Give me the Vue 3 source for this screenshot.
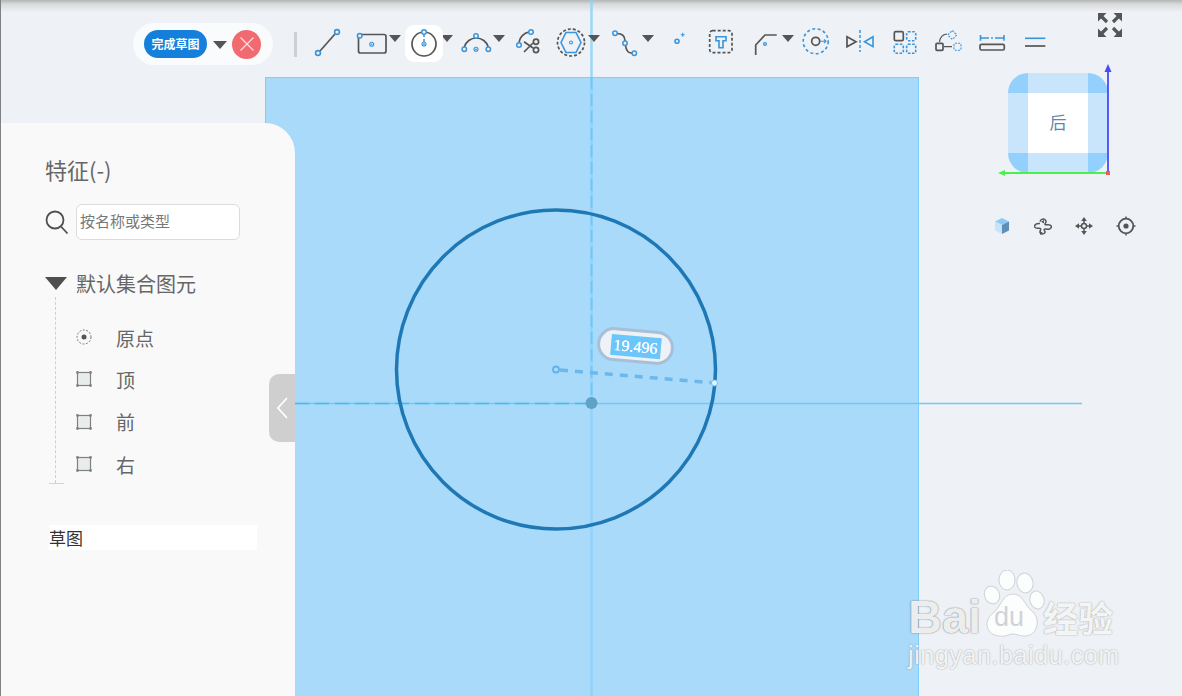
<script setup>
const tools = [
  { id: 'line', w: 44 },
  { id: 'rect', w: 52, caret: true },
  { id: 'circle', w: 52, caret: true, active: true },
  { id: 'arc', w: 52, caret: true },
  { id: 'trim', w: 43 },
  { id: 'polygon', w: 54, caret: true },
  { id: 'spline', w: 54, caret: true },
  { id: 'point', w: 42 },
  { id: 'text', w: 44 },
  { id: 'fillet', w: 51, caret: true },
  { id: 'offset', w: 44 },
  { id: 'mirror', w: 45 },
  { id: 'pattern', w: 43 },
  { id: 'transform', w: 44 },
  { id: 'dimension', w: 43 },
  { id: 'constraint', w: 36 }
]
const items = [
  { label: '原点', kind: 'origin' },
  { label: '顶', kind: 'plane' },
  { label: '前', kind: 'plane' },
  { label: '右', kind: 'plane' }
]
</script>

<template>
  <div class="app">
    <div class="top-shade"></div>

    <div class="plane"></div>

    <svg class="sketch" width="1182" height="696" viewBox="0 0 1182 696">
      <line x1="295" y1="403.5" x2="1082" y2="403.5" class="axis" />
      <line x1="295" y1="403.5" x2="590" y2="403.5" class="axis-dash" />
      <line x1="591.500" y1="0" x2="591.500" y2="696" class="axis-v" />
      <line x1="591.500" y1="77" x2="591.500" y2="403" class="axis-v-dash" />
      <circle cx="556" cy="369.500" r="159.500" class="profile" />
      <circle cx="591.500" cy="403" r="6" class="origin-blob" />
      <line x1="560" y1="370" x2="714" y2="383" class="dim-line" />
      <circle cx="556" cy="369.500" r="3" class="dim-start" />
      <circle cx="714.500" cy="383" r="3" class="dim-end" />
    </svg>

    <div class="dim-label"><span class="dim-value">19.496</span></div>

    <div class="toolbar">
      <div class="finish">
        <button class="finish-btn">完成草图</button>
        <span class="caret finish-caret"></span>
        <span class="cancel">
          <svg width="16" height="16" viewBox="0 0 16 16"><path d="M1.500 1.500l13 13M14.500 1.500l-13 13" class="x" /></svg>
        </span>
      </div>
      <div class="sep"></div>
      <div v-for="t in tools" :key="t.id" class="tool" :style="{ width: t.w + 'px' }">
        <div class="tool-icon" :class="{ active: t.active }">
          <svg width="36" height="36" viewBox="0 0 36 36">
            <template v-if="t.id === 'line'">
              <line x1="10" y1="26" x2="25" y2="9" class="d" />
              <circle cx="8" cy="28" r="2.400" class="b" /><circle cx="27" cy="7" r="2.400" class="b" />
            </template>
            <template v-else-if="t.id === 'rect'">
              <rect x="4.500" y="9.500" width="27.500" height="18.500" rx="2" class="d" />
              <circle cx="5.700" cy="10.700" r="2.300" class="bw" />
              <circle cx="17.700" cy="19.300" r="2" class="b-thin" /><circle cx="17.700" cy="19.300" r=".8" class="dot" />
            </template>
            <template v-else-if="t.id === 'circle'">
              <circle cx="18" cy="19" r="12" class="d" />
              <line x1="18" y1="9" x2="18" y2="18" class="b-dash" />
              <circle cx="18" cy="7" r="2.300" class="bw" />
              <circle cx="18" cy="19" r="2" class="b-thin" /><circle cx="18" cy="19" r=".9" class="dot" />
            </template>
            <template v-else-if="t.id === 'arc'">
              <path d="M6.300 22A12.500 12.500 0 0 1 30.300 22" class="d" />
              <circle cx="6.300" cy="24.300" r="2.200" class="bw" /><circle cx="30.300" cy="24.300" r="2.200" class="bw" />
              <circle cx="18" cy="11" r="2.200" class="bw" />
              <circle cx="18" cy="24.300" r="2" class="b-thin" /><circle cx="18" cy="24.300" r=".9" class="dot" />
            </template>
            <template v-else-if="t.id === 'trim'">
              <path d="M9 17.500C9.500 12 14 8 19 7" class="d" />
              <circle cx="21" cy="7" r="2.300" class="bw" /><circle cx="9" cy="20" r="2.300" class="bw" />
              <path d="M14 16.700L23 23M14 27L23 18" class="d" />
              <circle cx="26" cy="16.700" r="2.600" class="d" /><circle cx="26" cy="25" r="2.600" class="d" />
            </template>
            <template v-else-if="t.id === 'polygon'">
              <circle cx="18" cy="17.500" r="13.500" class="d dashed" />
              <path d="M8 17.500L13 7.500H23L28 17.500L23 27.500H13Z" class="b" />
              <circle cx="18" cy="17.500" r="1.500" class="b-thin" />
            </template>
            <template v-else-if="t.id === 'spline'">
              <path d="M10 8.500C16 8.500 18 12 18 16M18.500 20.500C19 25 21 28 25 28.200" class="d" />
              <circle cx="8" cy="8.300" r="2.200" class="bw" /><circle cx="18" cy="18.300" r="2.200" class="bw" /><circle cx="27.300" cy="28.300" r="2.200" class="bw" />
            </template>
            <template v-else-if="t.id === 'point'">
              <circle cx="16" cy="16.300" r="2" class="b" />
              <path d="M21.700 7.700v4M19.700 9.700h4" class="b-thin" />
            </template>
            <template v-else-if="t.id === 'text'">
              <rect x="6.700" y="5.700" width="22.300" height="22" rx="3" class="d dashed" />
              <path d="M13 11.700h10v4h-3v7h-4v-7h-3z" class="b" />
            </template>
            <template v-else-if="t.id === 'fillet'">
              <path d="M8.700 30V20L18 10H29.700" class="d" />
              <circle cx="18" cy="19" r="1.500" class="b-thin" /><circle cx="18" cy="19" r=".8" class="dot" />
            </template>
            <template v-else-if="t.id === 'offset'">
              <circle cx="17.700" cy="16.300" r="12.500" class="b dashed-b" />
              <circle cx="17.700" cy="16.300" r="4" class="d" />
              <path d="M22 16.300h6M26 14.500l2 1.800-2 1.800" class="b-thin" />
            </template>
            <template v-else-if="t.id === 'mirror'">
              <path d="M5 11.700L14 16.700L5 21.700Z" class="d" />
              <line x1="18" y1="5" x2="18" y2="27" class="b-dash" />
              <path d="M31 11.700L22.500 16.700L31 21.700Z" class="b" />
            </template>
            <template v-else-if="t.id === 'pattern'">
              <rect x="7.300" y="6.700" width="9" height="9" rx="1.500" class="d" />
              <rect x="19.700" y="6.700" width="9" height="9" rx="1.500" class="b dashed-s" />
              <rect x="7.300" y="19.300" width="9" height="9" rx="1.500" class="b dashed-s" />
              <rect x="19.700" y="19.300" width="9" height="9" rx="1.500" class="b dashed-s" />
            </template>
            <template v-else-if="t.id === 'transform'">
              <rect x="6" y="18.300" width="7" height="7" rx="1" class="d" />
              <rect x="24" y="18.300" width="7" height="7" rx="1" class="b-thin dashed-t" />
              <path d="M22.300 5.500l4.500 4.500-4.500 4.500-4.500-4.500z" class="b-thin dashed-t" />
              <path d="M9.500 17C10 12 13 9.500 17 9M14 21.700h8" class="d-thin" />
            </template>
            <template v-else-if="t.id === 'dimension'">
              <path d="M6.500 10v5.700M30 10v5.700M6.500 13H15M21 13h9" class="b" />
              <circle cx="18" cy="13" r=".9" class="dot" />
              <rect x="6" y="19.300" width="24.300" height="5.700" rx="1.500" class="d" />
            </template>
            <template v-else-if="t.id === 'constraint'">
              <line x1="8" y1="13.300" x2="28.300" y2="13.300" class="b" />
              <line x1="8" y1="21" x2="28.300" y2="21" class="d" />
            </template>
          </svg>
        </div>
        <span v-if="t.caret" class="caret"></span>
      </div>
    </div>

    <svg class="fullscreen" width="26" height="26" viewBox="0 0 26 26">
      <path d="M1 9.500V1H9.500ZM25 9.500V1H16.500ZM1 16.500V25H9.500ZM25 16.500V25H16.500Z" class="fs-fill" />
      <path d="M3 3L10 10M23 3L16 10M3 23L10 16M23 23L16 16" class="fs-line" />
    </svg>

    <div class="viewcube">
      <span class="c corner"></span><span class="c edge"></span><span class="c corner"></span>
      <span class="c edge"></span><span class="c face">后</span><span class="c edge"></span>
      <span class="c corner"></span><span class="c edge"></span><span class="c corner"></span>
    </div>
    <svg class="triad" width="120" height="120" viewBox="0 0 120 120">
      <path d="M112 114.500V10" class="ax-blue" />
      <path d="M112 4L108.500 12H115.500Z" class="tip-blue" />
      <path d="M112 113H8" class="ax-green" />
      <path d="M2 113L9 110V116Z" class="tip-green" />
      <rect x="110" y="111" width="4" height="4" class="red" />
    </svg>

    <div class="view-tools">
      <svg width="20" height="20" viewBox="0 0 20 20">
        <path d="M10 2L17 5.500L10 9L3 5.500Z" fill="#8ccbf8" />
        <path d="M3 5.500L10 9V18L3 14.500Z" fill="#c5e4fb" />
        <path d="M17 5.500L10 9V18L17 14.500Z" fill="#5e8fb8" />
      </svg>
      <svg width="20" height="20" viewBox="0 0 20 20">
        <path d="M7 5.500C8 2.500 12 2 13 5C13.500 7 11.500 7.500 12 8.500C13 9.500 17 7.500 18.300 10C19 12.500 15.500 14 13 13C11 12.500 10.500 14 12 15.500C12.500 18 8 19 7 16.500C6.500 14.500 8.500 13.500 7.500 12.500C6 11.500 3 13.500 1.700 11C1 8.500 4 7 7 7.500" class="vt" />
        <path d="M7 15l3 2-3 2zM11 4l-3 1.800 3 1.800z" class="vt-fill" />
      </svg>
      <svg width="20" height="20" viewBox="0 0 20 20">
        <path d="M10 3.500V7M10 13V16.500M3.500 10H7M13 10H16.500" class="vt" />
        <circle cx="10" cy="10" r="2.500" class="vt" />
        <path d="M10 1L12.800 5H7.200ZM10 19L7.200 15H12.800ZM1 10L5 7.200V12.800ZM19 10L15 12.800V7.200Z" class="vt-fill" />
      </svg>
      <svg width="20" height="20" viewBox="0 0 20 20">
        <circle cx="10" cy="10" r="7.300" class="vt vt-bold" />
        <circle cx="10" cy="10" r="2.600" class="vt-fill" />
        <path d="M10 .5V3M10 17V19.500M.5 10H3M17 10H19.500" class="vt" />
      </svg>
    </div>

    <aside class="panel">
      <h2 class="panel-title">特征(-)</h2>
      <div class="search">
        <svg width="24" height="26" viewBox="0 0 24 26">
          <circle cx="10" cy="11" r="8.500" class="search-ring" />
          <line x1="16" y1="17.500" x2="22.500" y2="24.500" class="search-ring" />
        </svg>
        <div class="search-input">按名称或类型</div>
      </div>
      <div class="tree">
        <div class="tree-head"><span class="tree-arrow"></span><span>默认集合图元</span></div>
        <ul class="tree-list">
          <li v-for="it in items" :key="it.label" class="tree-item">
            <svg width="16" height="16" viewBox="0 0 16 16">
              <template v-if="it.kind === 'origin'">
                <circle cx="8" cy="8" r="7" class="origin-ring" />
                <circle cx="8" cy="8" r="2.500" class="origin-dot" />
              </template>
              <template v-else>
                <rect x="1.500" y="1.500" width="13" height="13" class="plane-box" />
                <circle cx="1.500" cy="1.500" r="1.400" class="plane-dot" /><circle cx="14.500" cy="1.500" r="1.400" class="plane-dot" />
                <circle cx="1.500" cy="14.500" r="1.400" class="plane-dot" /><circle cx="14.500" cy="14.500" r="1.400" class="plane-dot" />
              </template>
            </svg>
            <span>{{ it.label }}</span>
          </li>
        </ul>
      </div>
      <div class="sketch-row">草图</div>
    </aside>

    <div class="collapse">
      <svg width="12" height="22" viewBox="0 0 12 22"><path d="M11 1L2 11L11 21" class="chev" /></svg>
    </div>

    <div class="watermark">
      <svg class="paw" width="64" height="68" viewBox="0 0 64 68">
        <ellipse cx="26" cy="10" rx="8" ry="10" class="wm" />
        <ellipse cx="44" cy="13" rx="8" ry="10" class="wm" transform="rotate(-10 44 13)" />
        <ellipse cx="11" cy="25" rx="7.500" ry="9" class="wm" transform="rotate(-20 11 25)" />
        <ellipse cx="56" cy="30" rx="7" ry="9" class="wm" transform="rotate(-15 56 30)" />
        <path d="M32 24C42 24 44 36 52 42C60 50 56 66 44 66C38 66 36 64 32 64C28 64 25 67 18 66C6 65 2 52 11 44C20 38 21 24 32 24Z" class="wm" />
      </svg>
      <span class="wm-bai">Bai</span>
      <span class="wm-du">du</span>
      <span class="wm-jy">经验</span>
      <span class="wm-url">jingyan.baidu.com</span>
    </div>
  </div>
</template>

<style>
html, body { margin: 0; padding: 0; }
</style>

<style scoped>
.app {
  position: relative;
  width: 1182px;
  height: 696px;
  overflow: hidden;
  background: #eef1f5;
  font-family: "Noto Sans CJK SC", "Noto Sans", sans-serif;
  border-left: 1px solid #7f8184;
  box-sizing: border-box;
}
.top-shade {
  position: absolute; left: -1px; right: 0; top: 0; height: 12px;
  background: linear-gradient(#b4b5b7, #d8dadc 35%, #eef1f5);
  z-index: 1;
}
.plane {
  position: absolute; left: 264px; top: 77px; width: 654px; height: 630px;
  box-sizing: border-box;
  background: #a9daf9;
  border: 1px solid #7fcdf8;
}
.sketch { position: absolute; left: -1px; top: 0; z-index: 2; }
.axis { stroke: #6ccaf8; stroke-width: 1.500; }
.axis-dash { stroke: #52b6e8; stroke-width: 1.500; stroke-dasharray: 14 6; }
.axis-v { stroke: #8dd3fa; stroke-width: 2.500; opacity: .85; }
.axis-v-dash { stroke: #6fc8f8; stroke-width: 2; stroke-dasharray: 12 5; }
.profile { fill: none; stroke: #1f78b6; stroke-width: 3.500; }
.origin-blob { fill: #5ea3c6; }
.dim-line { stroke: #6cb8ec; stroke-width: 3.500; stroke-dasharray: 8 7; }
.dim-start { fill: #a9daf9; stroke: #5fb3ea; stroke-width: 1.800; }
.dim-end { fill: #e8f6ff; stroke: #79c3f0; stroke-width: 1; }

.dim-label {
  position: absolute; left: 596px; top: 329px; z-index: 3;
  width: 77px; height: 34px; box-sizing: border-box;
  display: flex; align-items: center; justify-content: center;
  background: #eef1f5;
  border: 3px solid #a8bfd8;
  border-radius: 17px;
  transform: rotate(5deg);
}
.dim-value {
  background: #6ac6fb; color: #fff;
  font-family: "Liberation Serif", serif; font-size: 16px; font-weight: 400;
  line-height: 21px; padding: 0 3px;
  text-shadow: 0 0 .5px #fff;
}

.toolbar {
  position: absolute; left: 132px; top: 23px; z-index: 4;
  display: flex; align-items: center; height: 42px;
}
.finish {
  display: flex; align-items: center;
  width: 140px; height: 42px; box-sizing: border-box;
  padding-left: 11px;
  background: #fafbfc; border-radius: 21px;
}
.finish-btn {
  width: 63px; height: 28px; padding: 0; border: 0;
  border-radius: 14px; background: #1580dc; color: #fff;
  font-family: inherit; font-size: 12px; font-weight: 700; line-height: 28px;
}
.caret {
  display: block; width: 0; height: 0; flex: none;
  border-left: 6px solid transparent; border-right: 6px solid transparent;
  border-top: 7px solid #555;
}
.tool .caret { margin-left: -1px; margin-top: 10px; }
.finish-caret { margin-left: 6px; margin-top: 2px; border-left-width: 7px; border-right-width: 7px; border-top-width: 8px; }
.cancel {
  display: flex; align-items: center; justify-content: center;
  width: 29px; height: 29px; margin-left: 5px;
  border-radius: 50%; background: #f06a6f;
}
.x { stroke: #fbe0e1; stroke-width: 1.300; fill: none; }
.sep { width: 3px; height: 25px; margin: 0 13px 0 21px; background: #cdd0d2; flex: none; }
.tool { display: flex; align-items: flex-start; flex: none; height: 42px; padding-top: 2px; box-sizing: border-box; }
.tool-icon { flex: none; width: 36px; height: 36px; position: relative; }
.tool-icon svg { display: block; overflow: visible; position: relative; }
.tool-icon.active::before {
  content: ""; position: absolute; left: -1px; top: 0; width: 38px; height: 37px;
  background: #fff; border-radius: 9px;
}
.d { fill: none; stroke: #555; stroke-width: 1.700; }
.d-thin { fill: none; stroke: #555; stroke-width: 1.200; }
.b { fill: none; stroke: #3a94dc; stroke-width: 1.600; }
.bw { fill: #eef1f5; stroke: #3a94dc; stroke-width: 1.500; }
.b-thin { fill: none; stroke: #3a94dc; stroke-width: 1.100; }
.b-dash { stroke: #3a94dc; stroke-width: 1.500; stroke-dasharray: 3 2; }
.dot { fill: #3a94dc; }
.dashed { stroke-dasharray: 3 2; }
.dashed-b { stroke-dasharray: 3 2.500; }
.dashed-s { stroke-dasharray: 2.500 1.500; }
.dashed-t { stroke-dasharray: 2 1.200; }

.fullscreen { position: absolute; left: 1096px; top: 12px; z-index: 4; }
.fs-fill { fill: #555; }
.fs-line { stroke: #555; stroke-width: 3.200; fill: none; }

.viewcube {
  position: absolute; left: 1007px; top: 73px; z-index: 3;
  width: 100px; height: 100px;
  display: grid; grid-template-columns: 20px 60px 20px; grid-template-rows: 20px 60px 20px;
  border-radius: 20px; overflow: hidden;
}
.corner { background: #94d0fe; }
.edge { background: #c8e5fc; }
.face {
  background: #fff; color: #5d87ac; font-size: 17px; padding-bottom: 3px; box-sizing: border-box;
  display: flex; align-items: center; justify-content: center;
}
.triad { position: absolute; left: 995px; top: 60px; z-index: 4; }
.ax-blue { stroke: #4a4af8; stroke-width: 1.800; fill: none; }
.tip-blue { fill: #4a4af8; }
.ax-green { stroke: #4cf04c; stroke-width: 2; fill: none; }
.tip-green { fill: #4cf04c; }
.red { fill: #f25a5a; }

.view-tools {
  position: absolute; left: 990.700px; top: 216px; z-index: 3;
  display: flex; gap: 21.300px;
}
.vt { fill: none; stroke: #555; stroke-width: 1.500; }
.vt-bold { stroke-width: 1.800; }
.vt-fill { fill: #555; }

.panel {
  position: absolute; left: -1px; top: 123px; z-index: 5;
  width: 295px; height: 573px; box-sizing: border-box;
  padding: 31px 0 0 46px;
  background: #f9f9f9;
  border-top-right-radius: 30px;
  color: #666;
}
.panel-title { margin: 0 0 0 -1px; font-size: 22px; font-weight: 400; line-height: 30px; color: #666; }
.search { display: flex; align-items: center; gap: 7px; margin-top: 20px; margin-left: -1px; }
.search svg { flex: none; }
.search-ring { fill: none; stroke: #4f4f4f; stroke-width: 1.800; }
.search-input {
  width: 164px; height: 36px; box-sizing: border-box;
  padding-left: 3px; line-height: 31px;
  background: #fff; border: 1px solid #dcdcdc; border-radius: 6px;
  font-size: 15px; color: #777;
}
.tree { position: relative; margin-top: 28px; }
.tree::after {
  content: ""; position: absolute; left: 9px; top: 29px; height: 186px;
  border-left: 1px dashed #cfcfcf;
}
.tree::before {
  content: ""; position: absolute; left: 3px; top: 215px; width: 15px;
  border-top: 1px solid #d4d4d4;
}
.tree-head { display: flex; align-items: center; height: 30px; font-size: 20px; color: #666; }
.tree-arrow {
  display: block; width: 0; height: 0; margin: 0 9px 0 -1px;
  border-left: 11px solid transparent; border-right: 11px solid transparent;
  border-top: 13px solid #4f4f4f;
}
.tree-list { list-style: none; margin: 18px 0 0; padding: 0 0 0 30px; }
.tree-item { display: flex; align-items: center; gap: 24px; height: 42.300px; font-size: 19px; color: #666; }
.tree-item svg { flex: none; }
.origin-ring { fill: none; stroke: #777; stroke-width: 1; stroke-dasharray: 2 1.500; }
.origin-dot { fill: #555; }
.plane-box { fill: #e9ecec; stroke: #808080; stroke-width: 1.200; }
.plane-dot { fill: #808080; }
.sketch-row {
  width: 208px; height: 25px; margin: 40px 0 0 3px;
  background: #fff; color: #333; font-size: 17px; line-height: 26px;
}

.collapse {
  position: absolute; left: 268px; top: 374px; z-index: 6;
  width: 26px; height: 68px; box-sizing: border-box;
  display: flex; align-items: center; padding-left: 7px;
  background: #cfcfcf; border-radius: 10px 0 0 10px;
}
.chev { fill: none; stroke: #fff; stroke-width: 1.800; }

.watermark { position: absolute; left: 905px; top: 568px; width: 220px; height: 104px; z-index: 7; }
.paw { position: absolute; left: 75px; top: 2px; }
.wm { fill: rgba(255, 255, 255, .82); stroke: rgba(170, 175, 180, .5); stroke-width: 1; }
.wm-bai, .wm-du, .wm-jy, .wm-url { position: absolute; white-space: nowrap; line-height: 1; }
.wm-bai {
  left: 2px; top: 25px;
  font-family: "Liberation Sans", sans-serif; font-weight: 700; font-size: 47px;
  color: rgba(255, 255, 255, .88);
  text-shadow: 0 0 1.500px rgba(90, 95, 100, .75), 0 0 1px rgba(90, 95, 100, .5);
}
.wm-du {
  left: 88px; top: 36px;
  font-family: "Liberation Sans", sans-serif; font-size: 27px; font-weight: 400;
  color: rgba(195, 200, 205, .8);
}
.wm-jy {
  left: 137px; top: 31px;
  font-size: 35px; font-weight: 700;
  color: rgba(255, 255, 255, .92);
  text-shadow: 0 0 1.500px rgba(90, 95, 100, .7);
}
.wm-url {
  left: 2px; top: 75px;
  font-family: "Liberation Sans", sans-serif; font-size: 25px; letter-spacing: .6px;
  color: rgba(255, 255, 255, .9);
  text-shadow: 0 0 1.500px rgba(90, 95, 100, .65);
}
</style>
